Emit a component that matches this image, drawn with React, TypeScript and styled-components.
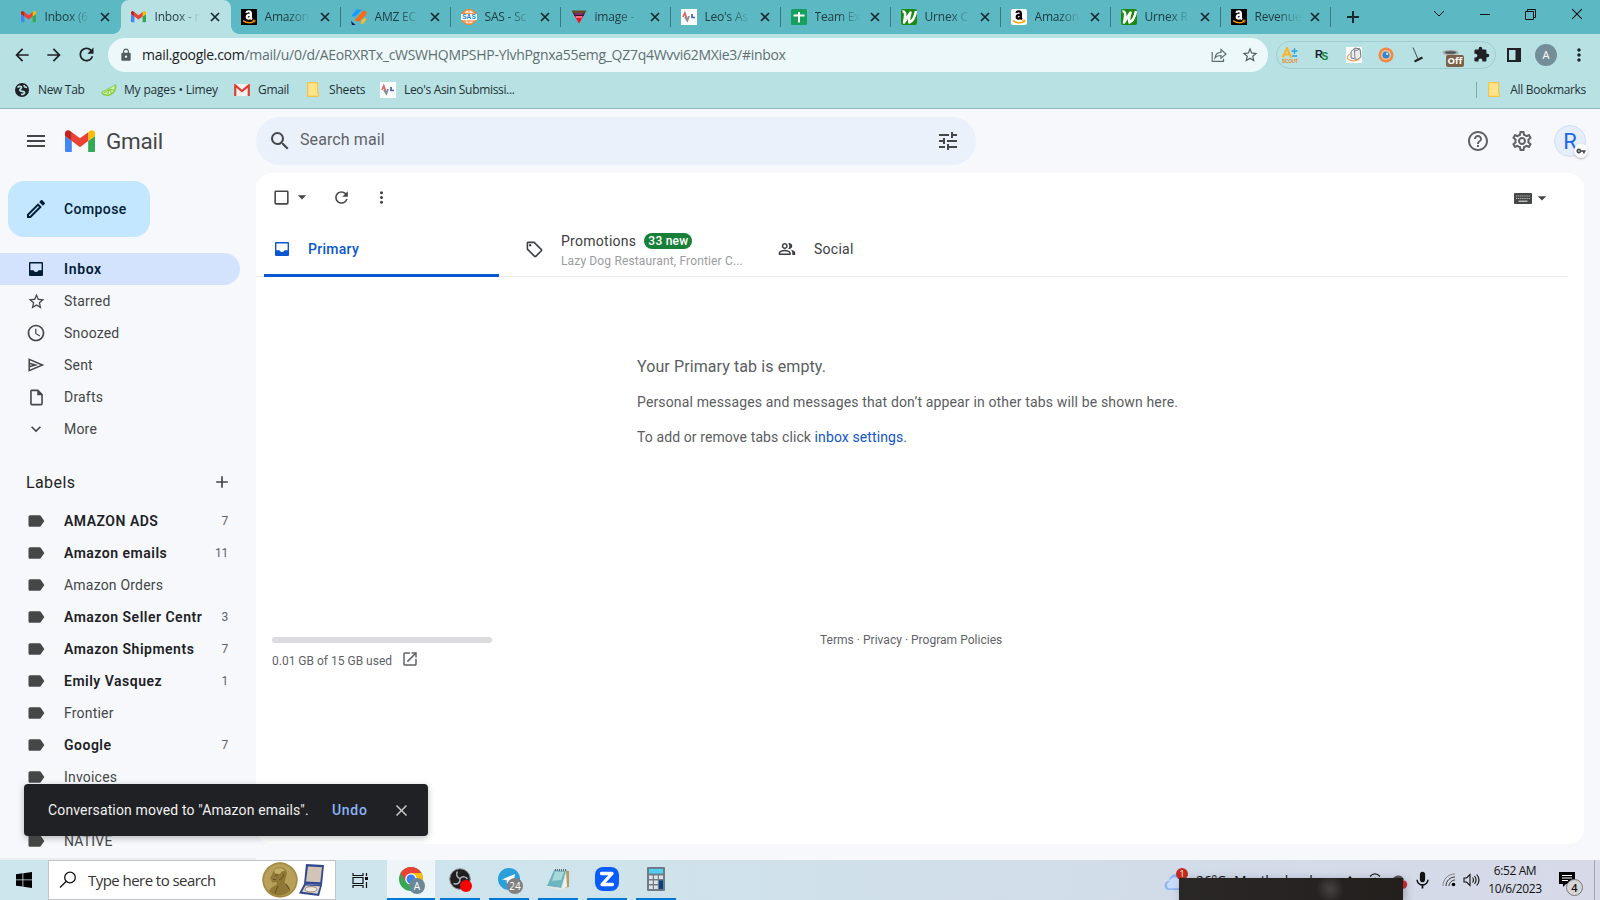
import React from "react";
import styled, { createGlobalStyle } from "styled-components";
import {
  MdMenu, MdSearch, MdTune, MdHelpOutline, MdOutlineSettings, MdArrowDropDown, MdRefresh, MdMoreVert,
  MdStarBorder, MdAccessTime, MdKeyboardArrowDown, MdAdd, MdLabel, MdOutlineSell,
  MdOutlinePeopleAlt, MdOpenInNew, MdClose, MdCheckBoxOutlineBlank, MdArrowBack, MdArrowForward,
  MdLock, MdExtension, MdOutlineModeEdit, MdVpnKey, MdOutlineInsertDriveFile, MdMic,
} from "react-icons/md";

const GlobalStyle = createGlobalStyle`
  * { box-sizing: border-box; }
  body { margin: 0; background: #f6f8fc; overflow: hidden; }
  svg { display: block; flex: none; }
`;

const ui = `"Open Sans", "Noto Sans", sans-serif`;
const product = `Roboto, "Liberation Sans", sans-serif`;

const Screen = styled.div`
  width: 1600px;
  height: 900px;
  display: flex;
  flex-direction: column;
  overflow: hidden;
  font-family: ${product};
  background: #f6f8fc;
`;

/* ---------- browser window ---------- */

const TabStrip = styled.div`
  height: 34px;
  flex: none;
  display: flex;
  padding-left: 10.5px;
  background: #5cb8c2;
  font-family: ${ui};
`;

const Tab = styled.div<{ $active?: boolean; $divider?: boolean }>`
  position: relative;
  width: 110px;
  height: 34px;
  flex: none;
  display: flex;
  align-items: center;
  padding-left: 10.5px;
  border-radius: 8px 8px 0 0;
  background: ${(p) => (p.$active ? "#b8e1e4" : "transparent")};
  &::before, &::after {
    content: "";
    display: ${(p) => (p.$active ? "block" : "none")};
    position: absolute;
    bottom: 0;
    width: 8px;
    height: 8px;
  }
  &::before { left: -8px; background: radial-gradient(circle at 0 0, transparent 7.5px, #b8e1e4 8px); }
  &::after {
    right: ${(p) => (p.$active ? "-8px" : "0")};
    ${(p) => (p.$active
      ? "background: radial-gradient(circle at 100% 0, transparent 7.5px, #b8e1e4 8px);"
      : "")}
    ${(p) => (p.$divider ? "display: block; width: 1px; height: 20px; bottom: 7px; background: #3c7a82;" : "")}
  }
`;

const TabIcon = styled.span`
  width: 16px;
  display: flex;
  flex: none;
`;

const TabTitle = styled.span`
  width: 46px;
  margin-left: 7.5px;
  font-size: 12px;
  letter-spacing: -0.2px;
  line-height: 18px;
  white-space: nowrap;
  color: #1d3a3e;
  mask-image: linear-gradient(90deg, #000 50%, rgba(0, 0, 0, 0.08) 94%);
`;

const TabClose = styled.span`
  margin-left: 9px;
  display: flex;
`;

const NewTab = styled.div`
  width: 44px;
  display: flex;
  align-items: center;
  justify-content: center;
`;

const WindowButtons = styled.div`
  margin-left: 41px;
  display: flex;
  height: 28px;
  align-items: center;
`;

const WindowButton = styled.div`
  width: 46px;
  display: flex;
  justify-content: center;
`;

const NavBar = styled.div`
  height: 41px;
  flex: none;
  display: flex;
  align-items: center;
  padding-left: 12px;
  background: #b8e1e4;
  color: #202124;
  font-family: ${ui};
`;

const NavButton = styled.div`
  width: 32px;
  display: flex;
  justify-content: flex-start;
`;

const AddressBar = styled.div`
  width: 1160px;
  height: 34px;
  display: flex;
  align-items: center;
  padding: 0 9px 0 11px;
  border-radius: 17px;
  background: #ecf8f9;
`;

const Url = styled.div`
  flex: 1;
  margin-left: 9px;
  font-size: 14px;
  letter-spacing: -0.285px;
  color: #5f6f72;
  white-space: nowrap;
  b { font-weight: 400; color: #202124; }
`;

const AddressActions = styled.div`
  display: flex;
  gap: 14px;
  align-items: center;
`;

const Extensions = styled.div`
  width: 220px;
  height: 28px;
  margin-left: 8px;
  border: 1px solid #a0cdd1;
  border-radius: 14px;
  display: flex;
  align-items: center;
`;

const Extension = styled.div<{ $w?: number }>`
  position: relative;
  width: ${(p) => p.$w ?? 32}px;
  padding-left: 5px;
  display: flex;
`;

const OffBadge = styled.span`
  position: absolute;
  left: 9px;
  top: 8px;
  width: 18px;
  height: 12px;
  border-radius: 2px;
  background: #7a6148;
  color: #fff;
  font-size: 9.5px;
  font-weight: 700;
  line-height: 12px;
  text-align: center;
`;

const Profile = styled.div`
  width: 22px;
  height: 22px;
  margin: 0 12px 0 14px;
  border-radius: 50%;
  background: #748e99;
  color: #fff;
  font-size: 11px;
  line-height: 22px;
  text-align: center;
`;

const BookmarksBar = styled.div`
  height: 34px;
  flex: none;
  display: flex;
  align-items: center;
  padding: 0 14px 4px 15px;
  background: #b8e1e4;
  border-bottom: 1px solid #8db6ba;
  font-family: ${ui};
  color: #1f3135;
`;

const Bookmark = styled.div<{ $w?: number; $tight?: boolean }>`
  display: flex;
  align-items: center;
  width: ${(p) => (p.$w ? `${p.$w}px` : "auto")};
  font-size: 12px;
  letter-spacing: ${(p) => (p.$tight ? "-0.33px" : "-0.18px")};
  white-space: nowrap;
`;

const BookmarkIcon = styled.span<{ $w?: number }>`
  width: ${(p) => p.$w ?? 24}px;
  display: flex;
  flex: none;
`;

const BookmarkDivider = styled.div`
  width: 1px;
  height: 16px;
  margin: 0 11px 0 auto;
  background: #7fa9ad;
`;

/* ---------- mail ---------- */

const Mail = styled.div`
  height: 751px;
  flex: none;
  display: flex;
  flex-direction: column;
  overflow: hidden;
  color: #444746;
`;

const MailHeader = styled.header`
  height: 64px;
  flex: none;
  display: flex;
  align-items: center;
  padding: 0 14px 0 24px;
`;

const Brand = styled.div`
  width: 232px;
  display: flex;
  align-items: center;
  font-size: 22.5px;
  letter-spacing: -0.25px;
  color: #444746;
  svg + svg { margin-left: 17px; }
`;

const BrandName = styled.span`
  margin-left: 11px;
`;

const SearchBox = styled.div`
  width: 720px;
  height: 48px;
  display: flex;
  align-items: center;
  padding: 0 16px 0 12px;
  border-radius: 24px;
  background: #eaf1fb;
`;

const SearchHint = styled.span`
  flex: 1;
  margin: 0 0 4px 8px;
  font-size: 16px;
  letter-spacing: 0.1px;
  color: #5f6368;
`;

const HeaderActions = styled.div`
  margin-left: auto;
  display: flex;
  align-items: center;
  gap: 20px;
  color: #5f6368;
`;

const Avatar = styled.div`
  position: relative;
  width: 32px;
  height: 32px;
  border: 1px solid #d3dff3;
  border-radius: 50%;
  background: #e6eefc;
  color: #1a66e8;
  font-size: 22px;
  line-height: 31px;
  text-align: center;
`;

const KeyBadge = styled.span`
  position: absolute;
  right: -3px;
  bottom: -2px;
  width: 14px;
  height: 14px;
  border-radius: 50%;
  background: #fff;
  box-shadow: 0 1px 2px rgba(60, 64, 67, 0.35);
  color: #444746;
  display: flex;
  align-items: center;
  justify-content: center;
`;

const MailBody = styled.div`
  flex: 1;
  min-height: 0;
  display: flex;
`;

const Sidebar = styled.nav`
  width: 256px;
  flex: none;
  overflow: hidden;
  padding-top: 8px;
  box-shadow: inset 0 -2px 0 #ebedf1;
`;

const Compose = styled.div`
  width: 142px;
  height: 56px;
  margin: 0 0 16px 8px;
  padding-left: 16px;
  display: flex;
  align-items: center;
  gap: 12px;
  border-radius: 16px;
  background: #c2e7ff;
  color: #001d35;
  font-size: 14px;
  font-weight: 500;
  letter-spacing: 0.42px;
  span { padding-left: 4px; }
`;

const NavRow = styled.div<{ $active?: boolean; $bold?: boolean }>`
  width: 240px;
  height: 32px;
  display: flex;
  align-items: center;
  padding: 0 12px 0 26px;
  border-radius: 0 16px 16px 0;
  background: ${(p) => (p.$active ? "#d3e3fd" : "transparent")};
  color: ${(p) => (p.$active ? "#001d35" : p.$bold ? "#202124" : "#444746")};
  font-size: 14px;
  font-weight: ${(p) => (p.$active || p.$bold ? 600 : 400)};
  letter-spacing: ${(p) => (p.$bold ? "0.5px" : p.$active ? "0.65px" : "0.2px")};
`;

const NavName = styled.span`
  width: 141px;
  margin-left: 18px;
  white-space: nowrap;
`;

const NavCount = styled.span`
  flex: 1;
  text-align: right;
  font-size: 12px;
  font-weight: 400;
  letter-spacing: -0.3px;
  color: #5f6368;
`;

const LabelsHead = styled.div`
  height: 44px;
  width: 240px;
  margin: 15px 0 1px;
  padding: 0 8px 0 26px;
  display: flex;
  align-items: center;
  justify-content: space-between;
  font-size: 16px;
  letter-spacing: 0.4px;
  color: #1f1f1f;
`;

const Panel = styled.main`
  width: 1328px;
  height: 671px;
  flex: none;
  display: flex;
  flex-direction: column;
  border-radius: 16px;
  background: #fff;
`;

const PanelTools = styled.div`
  height: 48px;
  flex: none;
  display: flex;
  align-items: center;
  padding: 0 32px 0 16px;
`;

const Spacer = styled.span<{ $w?: number }>`
  ${(p) => (p.$w ? `width: ${p.$w}px;` : "flex: 1;")}
`;

const InputTool = styled.div`
  display: flex;
  align-items: center;
  padding-top: 2px;
`;

const Categories = styled.div`
  width: 1312px;
  height: 56px;
  flex: none;
  display: flex;
  padding-left: 8px;
  border-bottom: 1px solid #eceeee;
`;

const Category = styled.div<{ $active?: boolean }>`
  width: ${(p) => (p.$active ? 235 : 253)}px;
  height: 56px;
  display: flex;
  align-items: center;
  padding-left: ${(p) => (p.$active ? 8 : 25)}px;
  font-size: 14px;
  font-weight: ${(p) => (p.$active ? 500 : 400)};
  letter-spacing: 0.27px;
  color: ${(p) => (p.$active ? "#0b57d0" : "#3c4043")};
  background: ${(p) =>
    p.$active ? "linear-gradient(#0b57d0, #0b57d0) bottom / 100% 3px no-repeat" : "none"};
  border-radius: 2px 2px 0 0;
`;

const CategoryText = styled.div<{ $inset?: boolean }>`
  margin-left: ${(p) => (p.$inset ? 17 : 16)}px;
`;

const CategoryTitle = styled.div`
  display: flex;
  align-items: center;
  gap: 8px;
  height: 18px;
  margin-top: 2px;
`;

const NewBadge = styled.span`
  height: 16px;
  padding: 0 4px;
  border-radius: 8px;
  background: #188038;
  color: #fff;
  font-size: 12px;
  font-weight: 500;
  line-height: 16px;
  letter-spacing: 0.25px;
`;

const CategoryPreview = styled.div`
  width: 183px;
  margin-top: 3px;
  height: 16px;
  font-size: 12px;
  line-height: 16px;
  letter-spacing: 0.15px;
  color: #9a9c9e;
  white-space: nowrap;
`;

const Empty = styled.section`
  height: 350px;
  padding: 79px 0 0 381px;
  font-size: 14px;
  letter-spacing: 0.15px;
  color: #5a5d61;
  white-space: nowrap;
  p { margin: 0 0 15px; line-height: 20px; }
  p + p { letter-spacing: 0.1px; }
  a { color: #1155cc; }
`;

const EmptyTitle = styled.h2`
  margin: 0 0 14px;
  font-size: 16px;
  font-weight: 400;
  line-height: 22px;
  letter-spacing: 0.1px;
`;

const PanelFooter = styled.footer`
  display: flex;
  padding: 5px 0 0 16px;
  font-size: 12px;
  color: #5f6368;
`;

const Storage = styled.div`
  width: 548px;
  padding-top: 5px;
`;

const StorageTrack = styled.div`
  width: 220px;
  height: 6px;
  border-radius: 3px;
  background: #dadce0;
`;

const StorageText = styled.div`
  margin-top: 7px;
  display: flex;
  align-items: center;
  gap: 9px;
  letter-spacing: 0;
  span { padding-top: 3px; }
`;

const Legal = styled.div`
  line-height: 16px;
  letter-spacing: 0.02px;
`;

const Toast = styled.div`
  position: absolute;
  left: 24px;
  top: 784px;
  width: 404px;
  height: 52px;
  padding: 0 17px 0 24px;
  display: flex;
  align-items: center;
  border-radius: 4px;
  background: #202124;
  color: #f1f1f1;
  font-size: 14px;
  letter-spacing: 0.14px;
  white-space: nowrap;
  box-shadow: 0 2px 6px rgba(60, 64, 67, 0.35);
`;

const ToastText = styled.span`
  width: 284px;
`;

const ToastAction = styled.span`
  flex: 1;
  font-weight: 500;
  letter-spacing: 0.7px;
  color: #8ab4f8;
`;

/* ---------- taskbar ---------- */

const Taskbar = styled.div`
  height: 40px;
  flex: none;
  display: flex;
  align-items: center;
  background: linear-gradient(90deg, #cce6ee 0%, #cfe3eb 40%, #d2dce9 72%, #d7d9e8 100%);
  font-family: ${ui};
  color: #111;
`;

const StartButton = styled.div`
  width: 48px;
  display: flex;
  justify-content: center;
`;

const TaskSearch = styled.div`
  width: 288px;
  height: 40px;
  padding-left: 10px;
  display: flex;
  align-items: center;
  background: #fff;
  border: 1px solid #bfc5c8;
  font-size: 15px;
  letter-spacing: -0.55px;
  color: #333;
`;

const TaskSearchHint = styled.span`
  width: 174px;
  margin-left: 11px;
  white-space: nowrap;
`;

const TaskView = styled.div`
  width: 51px;
  padding-right: 2px;
  display: flex;
  justify-content: center;
`;

const TaskApp = styled.div<{ $active?: boolean }>`
  position: relative;
  width: ${(p) => (p.$active ? 48 : 40)}px;
  height: 40px;
  margin-right: ${(p) => (p.$active ? 5 : 9)}px;
  display: flex;
  align-items: center;
  justify-content: center;
  background: ${(p) => (p.$active ? "#edf5f9" : "transparent")};
  border-bottom: 2px solid #0078d7;
`;

const AppBadge = styled.span<{ $bg: string; $size: number; $x: number }>`
  position: absolute;
  left: ${(p) => p.$x}px;
  bottom: ${(p) => 12 - p.$size / 2}px;
  width: ${(p) => p.$size}px;
  height: ${(p) => p.$size}px;
  border-radius: 50%;
  background: ${(p) => p.$bg};
  color: #fff;
  font-size: 10px;
  line-height: ${(p) => p.$size}px;
  text-align: center;
`;

const Tray = styled.div`
  position: relative;
  margin-left: auto;
  width: 436px;
  height: 40px;
  display: flex;
  align-items: center;
`;

const Weather = styled.div`
  width: 248px;
  height: 40px;
  padding-top: 1px;
  display: flex;
  align-items: center;
  font-size: 14px;
  letter-spacing: -0.35px;
  white-space: nowrap;
  svg + span { margin-left: 10px; width: 38px; }
  span + span { width: 104px; }
`;

const CloudSlot = styled.div`
  width: 32px;
  padding-top: 4px;
`;

const Temperature = styled.span`
  width: 38px;
`;

const TrayIcon = styled.div<{ $w: number }>`
  width: ${(p) => p.$w}px;
  display: flex;
  justify-content: center;
`;

const AlertDot = styled.span`
  position: absolute;
  left: 12px;
  top: 8px;
  width: 12px;
  height: 12px;
  border-radius: 50%;
  background: #c42b1c;
  color: #fff;
  font-size: 9px;
  line-height: 12px;
  text-align: center;
`;

const Overlay = styled.div`
  position: absolute;
  left: 15px;
  top: 18px;
  width: 224px;
  height: 22px;
  background: radial-gradient(ellipse 14px 14px at 151px 11px, #454241, transparent), linear-gradient(90deg, #2a2826, #221f1d);
  box-shadow: 2px 2px 8px rgba(40, 40, 60, 0.35);
`;

const Clock = styled.div`
  width: 62px;
  text-align: center;
  font-size: 12px;
  line-height: 18px;
  letter-spacing: -0.38px;
  white-space: nowrap;
`;

const Notifications = styled.div`
  position: relative;
  width: 49px;
  height: 40px;
  padding: 12px 0 0 13px;
  border-right: 1px solid #9fa5b0;
`;

const NotificationCount = styled.span`
  position: absolute;
  left: 20px;
  top: 19px;
  width: 17px;
  height: 17px;
  border: 1px solid #777;
  border-radius: 50%;
  background: #d6d6d6;
  font-size: 11px;
  font-weight: 600;
  line-height: 15px;
  text-align: center;
`;

const IconSlot = styled.span`
  width: 20px;
  display: flex;
  justify-content: center;
  flex: none;
`;

/* ---------- drawings ---------- */

const GmailMark = ({ w }: { w: number }) => (
  <svg width={w} height={w * 0.76} viewBox="52 42 88 66">
    <path fill="#4285f4" d="M58 108h14V74L52 59v43c0 3.32 2.69 6 6 6" />
    <path fill="#34a853" d="M120 108h14c3.32 0 6-2.69 6-6V59l-20 15" />
    <path fill="#fbbc04" d="M120 48v26l20-15v-8c0-7.42-8.47-11.65-14.4-7.2" />
    <path fill="#ea4335" d="M72 74V48l24 18 24-18v26L96 92" />
    <path fill="#c5221f" d="M52 51v8l20 15V48l-5.6-4.2c-5.94-4.45-14.4-.22-14.4 7.2" />
  </svg>
);

const OldGmail = () => (
  <svg width="16" height="12" viewBox="0 0 16 12">
    <rect width="16" height="12" rx="1" fill="#f4f0ee" />
    <path d="M1.2 12V1.4L8 7l6.8-5.6V12" fill="none" stroke="#d93f35" strokeWidth="2.2" />
  </svg>
);

const AmazonMark = ({ light }: { light?: boolean }) => (
  <svg width="16" height="16" viewBox="0 0 16 16">
    <rect width="16" height="16" rx={light ? 2 : 0} fill={light ? "#fff" : "#000"} />
    <g fill="none" stroke={light ? "#000" : "#fff"} strokeWidth="2.2">
      <path d="M5.3 3.8C6 1.7 9.9 1.6 9.9 4.4v4c0 1 .3 1.4 1 2" />
      <path d="M9.6 5.7C7 5.6 5.6 6.4 5.7 8.1c.2 2.4 4 1.8 4.1-.7" />
    </g>
    <path d="M2 11.6c4 2.7 8 2.7 11 .8" fill="none" stroke="#ff9900" strokeWidth="1.3" />
    <path d="M11.5 11.3l2.6-.1-.5 2.4" fill="none" stroke="#ff9900" />
  </svg>
);

const ZapMark = () => (
  <svg width="16" height="16" viewBox="0 0 16 16">
    <path d="M1 6l4.500-5.400h5.500L4.500 7.500H1z" fill="#1a9bfc" />
    <path d="M3.500 11.300L12 1.800l3.300.3-.300 4L8 12.500z" fill="#ff6a13" />
    <path d="M9.500 15l1-3.500 3-2.700 2 1.700-3 4z" fill="#fbb829" />
    <path d="M0 12l4.500 4H1z" fill="#10125c" />
  </svg>
);

const SasMark = () => (
  <svg width="16" height="16" viewBox="0 0 16 16">
    <circle cx="8" cy="8" r="7.4" fill="#fbe6d3" stroke="#f07f2d" strokeWidth="1.2" />
    <path d="M8 .5v15M4.500 1.500c-2 4-2 9 0 13M11.500 1.500c2 4 2 9 0 13M1 4.500h14M1 12h14" stroke="#f3904a" fill="none" strokeWidth=".9" />
    <rect x="0" y="5" width="16" height="6" fill="#fff" />
    <text x="8" y="10.300" fontSize="6.600" fontWeight="700" fontFamily="Liberation Sans, sans-serif" textAnchor="middle" fill="#1c86c8">SAS</text>
  </svg>
);

const TriangleMark = () => (
  <svg width="16" height="16" viewBox="0 0 16 16">
    <path d="M3 6h10L8 14.600z" fill="#f0102c" />
    <path d="M.5 1.500h15l-1.300 2.500H1.800z" fill="#6b4a28" />
    <path d="M2 4h12l-1.500 3h-9z" fill="#33102d" />
    <path d="M3.500 5h9" stroke="#e254b8" strokeWidth=".9" />
    <path d="M5 8h6" stroke="#fff" strokeWidth=".8" />
  </svg>
);

const LeoMark = () => (
  <svg width="16" height="16" viewBox="0 0 16 16">
    <path d="M0 0h16v16H0z" fill="#fff" />
    <path d="M2 8l1.800-4L5.500 9" fill="none" stroke="#dd6a6a" strokeWidth="1.800" />
    <path d="M4 8l2.300 3.500L8 7" fill="none" stroke="#8b8e96" strokeWidth="2" />
    <path d="M11 5v3.500h3" fill="none" stroke="#4560ae" strokeWidth="1.700" />
  </svg>
);

const SheetMark = () => (
  <svg width="16" height="16" viewBox="0 0 16 16">
    <rect width="16" height="16" rx="1.500" fill="#16a05d" />
    <path d="M8 3v10.500M2.500 6.500h11" stroke="#fff" strokeWidth="2" />
  </svg>
);

const UrnexMark = () => (
  <svg width="16" height="16" viewBox="0 0 16 16">
    <rect width="16" height="16" rx="2" fill="#1c8a12" />
    <path d="M1.500 2.500c3.500-.500 3 4 1.500 11L9.500 3.500c-1.500 4.500-2 7-1 10 3-1.500 5.500-6 6.500-11.500" fill="none" stroke="#fff" strokeWidth="2.500" strokeLinejoin="round" />
  </svg>
);

const Cross = ({ size, color, sw }: { size: number; color: string; sw: number }) => (
  <svg width={size} height={size} viewBox="0 0 10 10">
    <path d="M1 1l8 8M9 1L1 9" stroke={color} strokeWidth={sw} />
  </svg>
);

const Globe = () => (
  <svg width="14" height="14" viewBox="0 0 14 14">
    <circle cx="7" cy="7" r="7" fill="#202124" />
    <path d="M2.500 4.500C4 2.800 6.500 3 6.500 4.500S4 6 5 7.500s4 .2 4.500 1.800-1.500 2-3.500 2.200" fill="none" stroke="#b8e1e4" strokeWidth="1.700" />
    <path d="M9 2c0 2 1.500 2.500 3 2.500" fill="none" stroke="#b8e1e4" strokeWidth="1.500" />
  </svg>
);

const Lime = () => (
  <svg width="16" height="14" viewBox="0 0 16 14">
    <path d="M15 1C17 9 10 14.500 4 12.800 1.500 12.300 0 10.500.200 9z" fill="#8ccf4d" />
    <path d="M13.500 2.700C14.500 8 9.500 12 4.800 11.200 3 11 2 10 1.800 9.300z" fill="#d5efb2" />
    <path d="M8.500 6.200l4.500 1M8.500 6.200l2 4M8.500 6.200L6.500 11M8.500 6.200L3 10" stroke="#8ccf4d" strokeWidth="1.200" />
  </svg>
);

const Folder = () => (
  <svg width="12" height="15" viewBox="0 0 12 15">
    <path d="M.7.7h10v10.500l.8.800v2.300H.7z" fill="#ffe38a" stroke="#efc64a" strokeWidth="1.200" />
  </svg>
);

const ShareArrow = () => (
  <svg width="16" height="16" viewBox="0 0 16 16">
    <path d="M1.200 5v9.300h11.300v-2.500" fill="none" stroke="#5f6f72" strokeWidth="1.200" />
    <path d="M4 11c.5-4 3-5.700 6-5.700V2.500L15 7l-5 4.300V8.500C7.500 8.500 5.500 9 4 11z" fill="none" stroke="#5f6f72" strokeWidth="1.200" />
  </svg>
);

const ScoutMark = () => (
  <svg width="16" height="16" viewBox="0 0 16 16">
    <path d="M.8 10.500L5 1l4 9.500M2.500 7.500h5" stroke="#fbb321" strokeWidth="2" fill="none" />
    <path d="M12.500 1v6M9.500 4h6M10 9h5" stroke="#27a3dd" strokeWidth="1.300" />
    <text x="0" y="15.800" fontSize="4.800" fontWeight="700" textLength="16" fontFamily="Liberation Sans, sans-serif" fill="#e88a22">SCOUT</text>
  </svg>
);

const RsMark = () => (
  <svg width="16" height="16" viewBox="0 0 16 16">
    <text x="1" y="11" fontSize="11" fontWeight="700" fontFamily="Liberation Sans, sans-serif" fill="#17222c">R</text>
    <text x="7.500" y="13" fontSize="10" fontWeight="700" fontFamily="Liberation Sans, sans-serif" fill="#13843c">S</text>
  </svg>
);

const BoxMark = () => (
  <svg width="16" height="16" viewBox="0 0 16 16">
    <path d="M0 0h16v16H0z" fill="#fff" />
    <path d="M5 4.500L9 1l5 1 1 8-3.500 2.500L5 11z" fill="#ececed" stroke="#6f757b" />
    <path d="M9 1.500L8.500 4l.500 7.500M9 4l5-2" stroke="#7d8388" fill="none" />
    <path d="M4 7c-7 4 0 9 9.500 5.500" stroke="#ee9e55" strokeWidth="1.200" fill="none" />
  </svg>
);

const RingMark = () => (
  <svg width="16" height="16" viewBox="0 0 16 16">
    <circle cx="8" cy="8" r="7.500" fill="#ef8a45" />
    <circle cx="8" cy="8" r="5" fill="#f9c394" />
    <circle cx="8" cy="8" r="3.600" fill="#2d88d8" />
    <circle cx="9.200" cy="6.800" r="1.200" fill="#d4ebff" />
  </svg>
);

const BroomMark = () => (
  <svg width="16" height="16" viewBox="0 0 16 16">
    <path d="M3 .5L8 12" stroke="#3d4f52" strokeWidth="1" />
    <path d="M4.500 14.500l8-4" stroke="#222" strokeWidth="2" />
  </svg>
);

const CupMark = () => (
  <svg width="17" height="16" viewBox="0 0 17 16">
    <path d="M1 5h15v3l-2 1v6H4V9L1 8z" fill="#c9cdcf" />
    <ellipse cx="8.500" cy="5.500" rx="8" ry="2.500" fill="#a2a7a9" />
    <ellipse cx="8.500" cy="5.500" rx="5.500" ry="1.300" fill="#4d5152" />
  </svg>
);

const SidePanel = () => (
  <svg width="14" height="14" viewBox="0 0 14 14">
    <path d="M1 1h12v12H1z" fill="none" stroke="#202124" strokeWidth="2" />
    <path d="M8.500 1H13v12H8.500z" fill="#202124" />
  </svg>
);

const InboxIcon = () => (
  <svg width="14" height="14" viewBox="0 0 14 14">
    <path fill="currentColor" fillRule="evenodd" d="M1 0h12a1 1 0 0 1 1 1v12a1 1 0 0 1-1 1H1a1 1 0 0 1-1-1V1a1 1 0 0 1 1-1zM1.400 1.400v6.800h3.100A2.600 2.600 0 0 0 7 10a2.600 2.600 0 0 0 2.500-1.800h3.100V1.400z" />
  </svg>
);

const SendIcon = () => (
  <svg width="20" height="20" viewBox="0 0 20 20">
    <path d="M3.200 4.300v11.400L16.500 10z M3.200 8.200L9.500 10l-6.300 1.800" fill="none" stroke="currentColor" strokeWidth="1.500" />
  </svg>
);

const KeyboardIcon = () => (
  <svg width="18" height="11" viewBox="0 0 18 11">
    <rect width="18" height="11" rx="1" fill="#444746" />
    <path d="M2 3h14M2 5.500h14" stroke="#c9cbca" strokeWidth="1.200" strokeDasharray="1.200 .9" />
    <path d="M4.500 8.200h9" stroke="#e3e4e4" strokeWidth="1.100" />
  </svg>
);

const TaskSearchIcon = () => (
  <svg width="18" height="18" viewBox="0 0 18 18">
    <circle cx="11" cy="6.500" r="5.300" fill="none" stroke="#111" strokeWidth="1.300" />
    <path d="M7.300 10.300L1 16.500" stroke="#111" strokeWidth="1.300" />
  </svg>
);

const Medal = () => (
  <svg width="36" height="36" viewBox="0 0 36 36">
    <circle cx="18" cy="18" r="17.700" fill="#a38a40" />
    <circle cx="18" cy="18" r="16" fill="#b8a05a" />
    <path d="M7 29c2-4 6-5 8-7l-1-2-4 .500-1-3-1-1.500 2.500-4C11 7 15 5 19.500 5.500c5 1 6.500 5 4.500 9l-1.500 6c3 2 6 5 6 8-6 6.500-16 7-21.500.500z" fill="#8f7837" />
    <path d="M12 8.500c4-3.500 9-3 11 0-3 .500-4 1.500-5 3.500l-5-.500z" fill="#c3ae66" />
    <path d="M22 12c-1 3-2 5-5 6M13 13h3M11 17.500h3M24 22l3 5M16 24l-3 7" stroke="#65521f" fill="none" />
  </svg>
);

const CaseDrawing = () => (
  <svg width="28" height="34" viewBox="0 0 28 34">
    <path d="M8 1l18 1-2 20-18-1z" fill="#31498f" />
    <path d="M10 3.500l14 .800-1.700 15-14.300-.700z" fill="#d3c4b8" />
    <path d="M6 21l18 1-3 11-20-2.500z" fill="#31498f" />
    <path d="M7.500 22.500l14.500.800-2.500 7.500-15.500-2z" fill="#ded6ca" />
    <ellipse cx="13" cy="26.300" rx="6" ry="2.700" fill="#efe9dd" stroke="#958a7b" />
  </svg>
);

const TaskViewIcon = () => (
  <svg width="17" height="17" viewBox="0 0 17 17">
    <path d="M1 1v2.500h10V1M1 16v-2.500h10V16M1 5.500h10v6H1zM14.500 1v3M14.500 10v6" fill="none" stroke="#111" strokeWidth="1.200" />
    <path d="M13 5h3v3h-3z" fill="#111" />
  </svg>
);

const Chrome = () => (
  <svg width="24" height="24" viewBox="0 0 24 24">
    <circle cx="12" cy="12" r="12" fill="#34a853" />
    <path d="M12 6h10.400A12 12 0 0 1 12 24l5.200-9z" fill="#fbbc04" />
    <path d="M1.600 6L7 15.300 12 6h10.400A12 12 0 0 0 1.600 6z" fill="#ea4335" />
    <circle cx="12" cy="12" r="5.800" fill="#fff" />
    <circle cx="12" cy="12" r="4.500" fill="#3b82f0" />
  </svg>
);

const Obs = () => (
  <svg width="22" height="22" viewBox="0 0 22 22">
    <circle cx="11" cy="11" r="10.300" fill="#1f1f21" stroke="#8f8f92" />
    <path d="M8.500 3.500C6.500 6.500 8 9.500 11 10.500c2.500-2.500 6-2 7.500.500M11 10.500c.5 4-2.500 6.500-6.500 5" fill="none" stroke="#b2b2b6" strokeWidth="1.500" />
  </svg>
);

const Telegram = () => (
  <svg width="22" height="22" viewBox="0 0 22 22">
    <circle cx="11" cy="11" r="11" fill="#2a9fda" />
    <path d="M4 11.500L17 6l-2 11-4-3-2 2-.5-4z" fill="#fff" />
  </svg>
);

const Notepad = () => (
  <svg width="24" height="24" viewBox="0 0 24 24">
    <path d="M19 3l4 1v16l-5 1z" fill="#b59b68" />
    <path d="M8 3l12 1-5 17-14-2z" fill="#6fb5bf" />
    <path d="M9 4.500l9 .5-3 8-9 1z" fill="#a6d8dc" />
    <path d="M1 19l14 2 1 2-12-2z" fill="#e6e6e3" />
    <path d="M20 4l1 16-5 2z" fill="#f0efe9" />
    <path d="M9 3h11" stroke="#58696d" strokeDasharray="1 1" strokeWidth="2" />
  </svg>
);

const Zoom = () => (
  <svg width="24" height="24" viewBox="0 0 24 24">
    <rect width="24" height="24" rx="8" fill="#0b5cff" />
    <path d="M6.500 6.500h10.500L7 17.500h10.500" fill="none" stroke="#fff" strokeWidth="3.300" strokeLinejoin="round" strokeLinecap="round" />
  </svg>
);

const Calculator = () => (
  <svg width="18" height="24" viewBox="0 0 18 24">
    <rect width="18" height="24" rx="1" fill="#6f7c88" />
    <path d="M2 2h14v4.500H2z" fill="#4fd1f2" />
    <path d="M2 8.500h3.800v3.600H2zM7 8.500h3.800v3.600H7zM12 8.500h4v3.600h-4zM2 13.500h3.800v3.600H2zM7 13.500h3.800v3.600H7zM2 18.500h3.800v3.600H2zM7 18.500h3.800v3.600H7z" fill="#dfe3e6" />
    <path d="M12 13.500h4v8.600h-4z" fill="#0a3f82" />
  </svg>
);

const Cloud = () => (
  <svg width="24" height="17" viewBox="0 0 24 17">
    <path d="M5 16a4.500 4.500 0 0 1 0-9A7 7 0 0 1 19 7a4.500 4.500 0 0 1 0 9z" fill="#8fb4f3" />
    <path d="M5 14.500a3.500 3.500 0 0 1 0-6.500c2-6 9-6 12-1v7z" fill="#c9dcfb" />
  </svg>
);

/* small tray symbols whose upper edges show above the dark window */
const HiddenTray = () => (
  <svg width="74" height="18" viewBox="0 0 74 18">
    <path d="M8 9.500L12 5l4 4.500" fill="none" stroke="#111" strokeWidth="1.300" />
    <path d="M32 4.500c3-3.500 7-3.500 10 0M34 8c2-2.500 5-2 7 1" fill="none" stroke="#222" strokeWidth="1.300" />
    <path d="M54 8c2-6 11-6 12 0z" fill="#555" />
    <circle cx="65" cy="12.500" r="4.200" fill="#d8262c" />
  </svg>
);

/* ---------- content ---------- */

const tabs: { title: string; icon: React.ReactNode; active?: boolean }[] = [
  { title: "Inbox (6", icon: <GmailMark w={15} /> },
  { title: "Inbox - r", icon: <GmailMark w={15} />, active: true },
  { title: "Amazon", icon: <AmazonMark /> },
  { title: "AMZ EC", icon: <ZapMark /> },
  { title: "SAS - Sc", icon: <SasMark /> },
  { title: "image -", icon: <TriangleMark /> },
  { title: "Leo's As", icon: <LeoMark /> },
  { title: "Team Ex", icon: <SheetMark /> },
  { title: "Urnex C", icon: <UrnexMark /> },
  { title: "Amazon", icon: <AmazonMark light /> },
  { title: "Urnex R", icon: <UrnexMark /> },
  { title: "Revenue", icon: <AmazonMark /> },
];

const folders = [
  { name: "Inbox", icon: <InboxIcon />, active: true },
  { name: "Starred", icon: <MdStarBorder size={19} /> },
  { name: "Snoozed", icon: <MdAccessTime size={20} /> },
  { name: "Sent", icon: <SendIcon /> },
  { name: "Drafts", icon: <MdOutlineInsertDriveFile size={19} /> },
  { name: "More", icon: <MdKeyboardArrowDown size={20} /> },
];

const labels: [string, number?][] = [
  ["AMAZON ADS", 7], ["Amazon emails", 11], ["Amazon Orders"], ["Amazon Seller Centr", 3],
  ["Amazon Shipments", 7], ["Emily Vasquez", 1], ["Frontier"], ["Google", 7], ["Invoices"], [""], ["NATIVE"],
];

export default function App() {
  return (
    <Screen>
      <GlobalStyle />
      <TabStrip>
        {tabs.map((t, i) => (
          <Tab key={i} $active={t.active} $divider={i > 1}>
            <TabIcon>{t.icon}</TabIcon>
            <TabTitle>{t.title}</TabTitle>
            <TabClose><Cross size={10} color="#17292c" sw={1.7} /></TabClose>
          </Tab>
        ))}
        <NewTab>
          <svg width="12" height="12" viewBox="0 0 12 12"><path d="M6 0v12M0 6h12" stroke="#17292c" strokeWidth="2" /></svg>
        </NewTab>
        <WindowButtons>
          <WindowButton><svg width="12" height="8" viewBox="0 0 12 8"><path d="M1 1l5 5 5-5" fill="none" stroke="#111" /></svg></WindowButton>
          <WindowButton><svg width="10" height="10" viewBox="0 0 10 10"><path d="M0 5.500h10" stroke="#111" /></svg></WindowButton>
          <WindowButton><svg width="11" height="11" viewBox="0 0 11 11"><path d="M.5 2.500h8v8h-8zM2.500 2.500v-2h8v8h-2" fill="none" stroke="#111" /></svg></WindowButton>
          <WindowButton><Cross size={12} color="#111" sw={0.9} /></WindowButton>
        </WindowButtons>
      </TabStrip>

      <NavBar>
        <NavButton><MdArrowBack size={20} /></NavButton>
        <NavButton><MdArrowForward size={20} /></NavButton>
        <NavButton><MdRefresh size={21} /></NavButton>
        <AddressBar>
          <MdLock size={14} color="#4f5d60" />
          <Url><b>mail.google.com</b>/mail/u/0/d/AEoRXRTx_cWSWHQMPSHP-YlvhPgnxa55emg_QZ7q4Wvvi62MXie3/#inbox</Url>
          <AddressActions>
            <ShareArrow />
            <MdStarBorder size={18} color="#4f5d60" />
          </AddressActions>
        </AddressBar>
        <Extensions>
          <Extension><ScoutMark /></Extension>
          <Extension><RsMark /></Extension>
          <Extension><BoxMark /></Extension>
          <Extension><RingMark /></Extension>
          <Extension><BroomMark /></Extension>
          <Extension $w={36}><CupMark /><OffBadge>Off</OffBadge></Extension>
          <MdExtension size={17} />
        </Extensions>
        <Spacer $w={11} />
        <SidePanel />
        <Profile>A</Profile>
        <MdMoreVert size={20} />
      </NavBar>

      <BookmarksBar>
        <Bookmark $w={86} $tight><BookmarkIcon $w={23}><Globe /></BookmarkIcon>New Tab</Bookmark>
        <Bookmark $w={133}><BookmarkIcon $w={23}><Lime /></BookmarkIcon>My pages • Limey</Bookmark>
        <Bookmark $w={73} $tight><BookmarkIcon><OldGmail /></BookmarkIcon>Gmail</Bookmark>
        <Bookmark $w={73}><BookmarkIcon $w={22}><Folder /></BookmarkIcon>Sheets</Bookmark>
        <Bookmark $tight><BookmarkIcon><LeoMark /></BookmarkIcon>Leo's Asin Submissi...</Bookmark>
        <BookmarkDivider />
        <Bookmark $tight><BookmarkIcon $w={22}><Folder /></BookmarkIcon>All Bookmarks</Bookmark>
      </BookmarksBar>

      <Mail>
        <MailHeader>
          <Brand>
            <MdMenu size={24} />
            <GmailMark w={30} />
            <BrandName>Gmail</BrandName>
          </Brand>
          <SearchBox>
            <MdSearch size={24} />
            <SearchHint>Search mail</SearchHint>
            <MdTune size={24} />
          </SearchBox>
          <HeaderActions>
            <MdHelpOutline size={24} />
            <MdOutlineSettings size={24} />
            <Avatar>R<KeyBadge><MdVpnKey size={10} /></KeyBadge></Avatar>
          </HeaderActions>
        </MailHeader>

        <MailBody>
          <Sidebar>
            <Compose><MdOutlineModeEdit size={24} /><span>Compose</span></Compose>
            {folders.map((f) => (
              <NavRow key={f.name} $active={f.active}>
                <IconSlot>{f.icon}</IconSlot>
                <NavName>{f.name}</NavName>
              </NavRow>
            ))}
            <LabelsHead>Labels<MdAdd size={20} color="#444746" /></LabelsHead>
            {labels.map(([name, count]) => (
              <NavRow key={name} $bold={count !== undefined}>
                <IconSlot><MdLabel size={20} color="#444746" /></IconSlot>
                <NavName>{name}</NavName>
                <NavCount>{count}</NavCount>
              </NavRow>
            ))}
          </Sidebar>

          <Panel>
            <PanelTools>
              <MdCheckBoxOutlineBlank size={19} />
              <Spacer $w={1} />
              <MdArrowDropDown size={20} />
              <Spacer $w={20} />
              <MdRefresh size={19} />
              <Spacer $w={21} />
              <MdMoreVert size={19} />
              <Spacer />
              <InputTool>
                <KeyboardIcon />
                <MdArrowDropDown size={20} />
              </InputTool>
            </PanelTools>
            <Categories>
              <Category $active>
                <IconSlot><InboxIcon /></IconSlot>
                <CategoryText>Primary</CategoryText>
              </Category>
              <Category>
                <IconSlot><MdOutlineSell size={19} /></IconSlot>
                <CategoryText $inset>
                  <CategoryTitle>Promotions<NewBadge>33 new</NewBadge></CategoryTitle>
                  <CategoryPreview>Lazy Dog Restaurant, Frontier C...</CategoryPreview>
                </CategoryText>
              </Category>
              <Category>
                <IconSlot><MdOutlinePeopleAlt size={18} /></IconSlot>
                <CategoryText $inset>Social</CategoryText>
              </Category>
            </Categories>
            <Empty>
              <EmptyTitle>Your Primary tab is empty.</EmptyTitle>
              <p>Personal messages and messages that don’t appear in other tabs will be shown here.</p>
              <p>To add or remove tabs click <a>inbox settings</a>.</p>
            </Empty>
            <PanelFooter>
              <Storage>
                <StorageTrack />
                <StorageText><span>0.01 GB of 15 GB used</span><MdOpenInNew size={18} /></StorageText>
              </Storage>
              <Legal>Terms · Privacy · Program Policies</Legal>
            </PanelFooter>
          </Panel>
        </MailBody>
      </Mail>

      <Toast>
        <ToastText>Conversation moved to "Amazon emails".</ToastText>
        <ToastAction>Undo</ToastAction>
        <MdClose size={19} color="#c4c7c5" />
      </Toast>

      <Taskbar>
        <StartButton>
          <svg width="16" height="16" viewBox="0 0 16 16"><path d="M0 2.200L6.500 1.300v6.200H0zM7.300 1.200L16 0v7.500H7.300zM0 8.300h6.500v6.300L0 13.700zM7.300 8.300H16V16l-8.700-1.200z" fill="#000" /></svg>
        </StartButton>
        <TaskSearch>
          <TaskSearchIcon />
          <TaskSearchHint>Type here to search</TaskSearchHint>
          <Medal />
          <CaseDrawing />
        </TaskSearch>
        <TaskView><TaskViewIcon /></TaskView>
        <TaskApp $active><Chrome /><AppBadge $bg="#6c8894" $size={16} $x={22}>A</AppBadge></TaskApp>
        <TaskApp><Obs /><AppBadge $bg="#ff0000" $size={12} $x={20} /></TaskApp>
        <TaskApp><Telegram /><AppBadge $bg="#808080" $size={16} $x={18}>24</AppBadge></TaskApp>
        <TaskApp><Notepad /></TaskApp>
        <TaskApp><Zoom /></TaskApp>
        <TaskApp><Calculator /></TaskApp>
        <Tray>
          <Weather>
            <CloudSlot><Cloud /></CloudSlot>
            <Temperature>26°C</Temperature>
            <span>Mostly cloudy</span>
            <HiddenTray />
          </Weather>
          <AlertDot>1</AlertDot>
          <Overlay />
          <TrayIcon $w={20}><MdMic size={21} /></TrayIcon>
          <TrayIcon $w={34}>
            <svg width="14" height="14" viewBox="0 0 14 14"><g fill="none" stroke="#333"><path d="M1 13C1 6 6 1 13 1" stroke="#888" /><path d="M4 13C4 8 8 4 13 4" /><path d="M7 13c0-3 3-6 6-6" /></g><circle cx="11.500" cy="11.500" r="1.800" /></svg>
          </TrayIcon>
          <TrayIcon $w={10}>
            <svg width="17" height="14" viewBox="0 0 17 14"><path d="M1 5h2.500L7 1.500v11L3.500 9H1zM9.500 4.500c1.200 1.500 1.200 3.500 0 5M11.500 3c2 2.500 2 5.500 0 8M13.700 1.500c3 3.500 3 7.500 0 11" fill="none" stroke="#111" strokeWidth="1.100" /></svg>
          </TrayIcon>
          <Spacer $w={8} />
          <Clock>6:52 AM<br />10/6/2023</Clock>
          <Notifications>
            <svg width="16" height="15" viewBox="0 0 16 15"><path d="M0 0h16v12H7l-3 3v-3H0z" /><path d="M3 3.500h10M3 6h10M3 8.500h6" stroke="#fff" /></svg>
            <NotificationCount>4</NotificationCount>
          </Notifications>
        </Tray>
      </Taskbar>
    </Screen>
  );
}
